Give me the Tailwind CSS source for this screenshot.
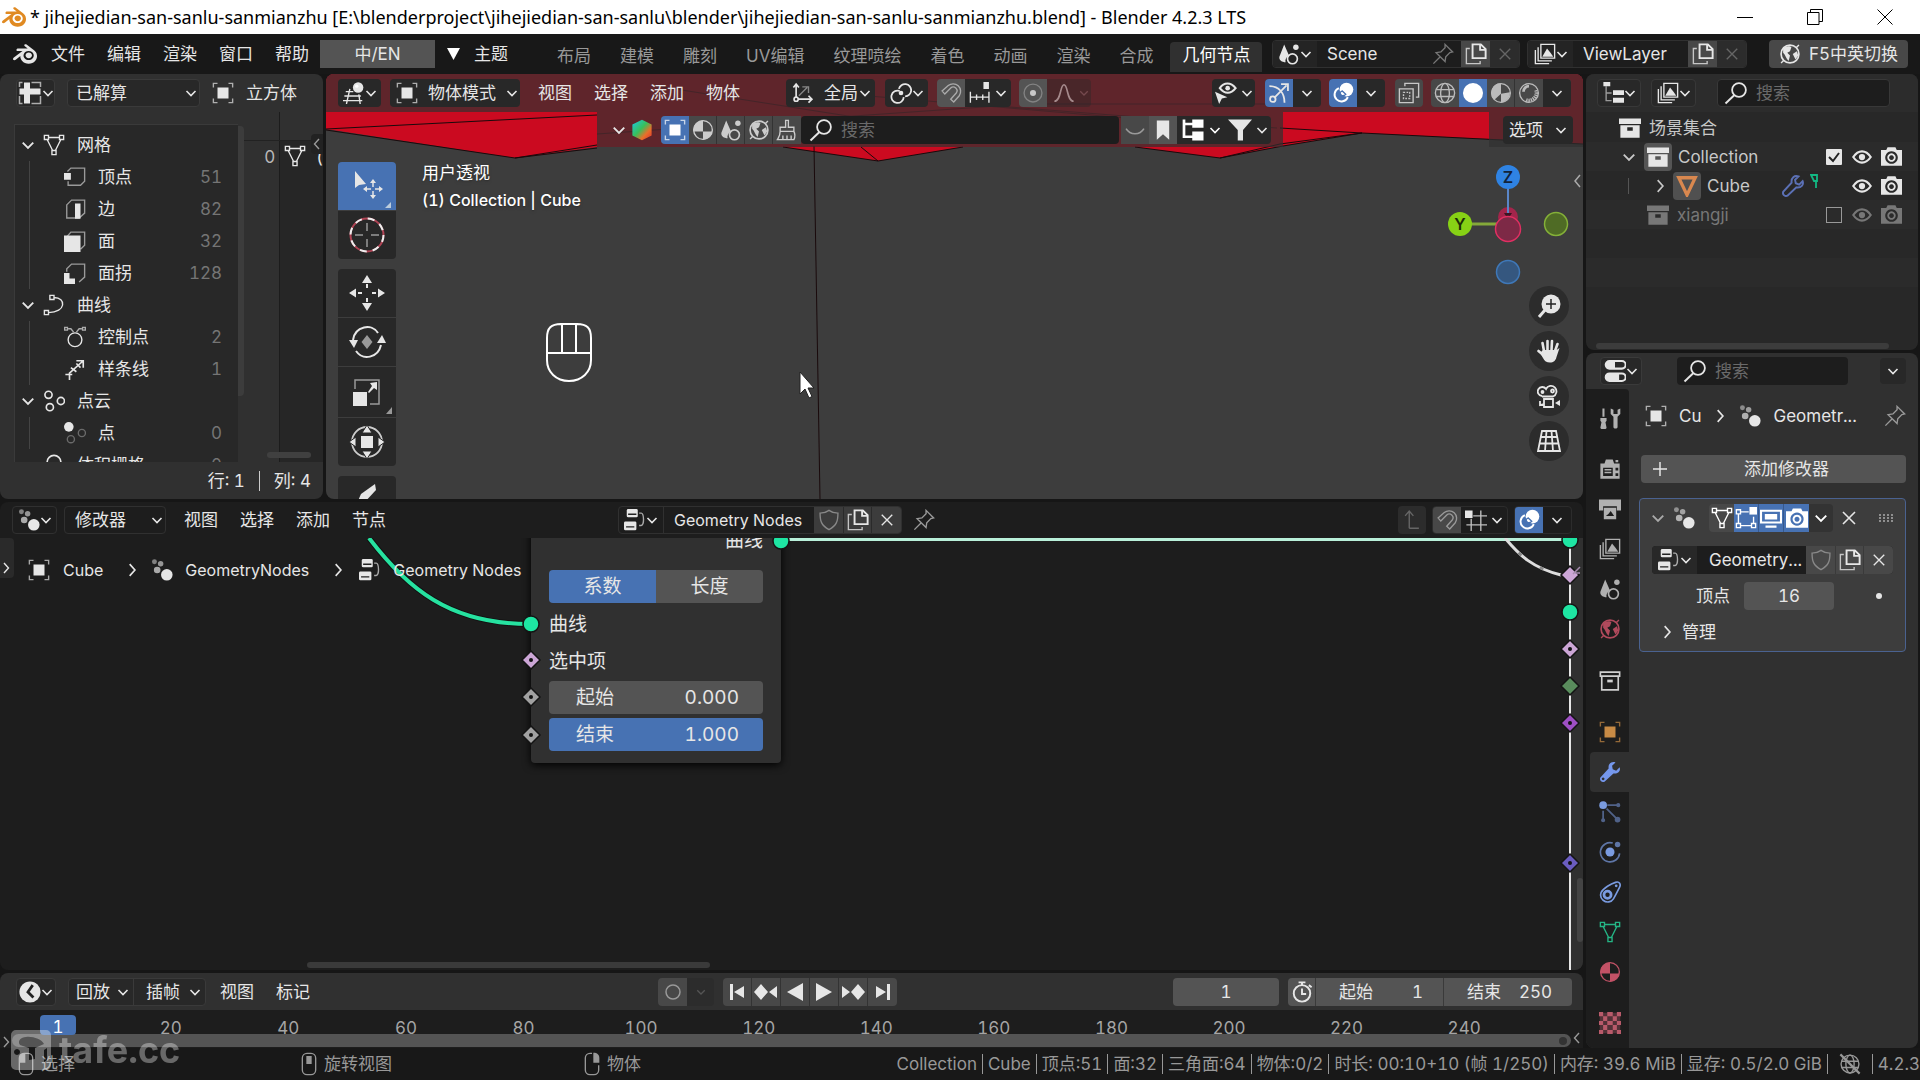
<!DOCTYPE html>
<html lang="zh-CN">
<head>
    <meta charset="UTF-8">
    <meta name="viewport" content="width=device-width, initial-scale=1.0">
    <title>Blender 4.2.3 LTS</title>
    <script src="https://cdn.jsdelivr.net/npm/@tailwindcss/browser@4"></script>
</head>
<body class="h-screen overflow-hidden flex flex-col bg-[#161616] text-[#e6e6e6] text-[17px] leading-6 whitespace-nowrap tabular-nums font-['Inter','Noto_Sans_CJK_SC',sans-serif]">

<!-- Icon set -->
<svg class="absolute size-0" xmlns="http://www.w3.org/2000/svg">
    <defs><linearGradient id="rainbow" x1="0" y1="0" x2="1" y2="1"><stop offset="0" stop-color="#19c8e6"/><stop offset=".45" stop-color="#38c05a"/><stop offset=".7" stop-color="#e8702a"/><stop offset="1" stop-color="#e0302c"/></linearGradient></defs>
    <symbol id="blender" viewBox="0 0 24 24"><path fill="currentColor" d="M12.51 13.214c.046-.8.438-1.506 1.03-2.006a3.424 3.424 0 0 1 2.212-.79c.85 0 1.631.3 2.211.79.592.5.983 1.206 1.028 2.005.045.823-.285 1.586-.865 2.153a3.389 3.389 0 0 1-2.374.938 3.393 3.393 0 0 1-2.376-.938c-.58-.567-.91-1.33-.865-2.152M7.35 14.831c.006.314.106.922.256 1.398a7.372 7.372 0 0 0 1.593 2.757 8.227 8.227 0 0 0 2.787 2.001 8.947 8.947 0 0 0 3.66.76 8.964 8.964 0 0 0 3.657-.772 8.285 8.285 0 0 0 2.785-2.01 7.428 7.428 0 0 0 1.592-2.762 6.964 6.964 0 0 0 .25-3.074 7.123 7.123 0 0 0-1.016-2.779 7.764 7.764 0 0 0-1.852-2.043h.002L13.566 2.55l-.02-.015c-.492-.378-1.319-.376-1.86.002-.547.382-.609 1.015-.123 1.415l-.001.001 3.126 2.543-9.53.01h-.013c-.788.001-1.545.518-1.695 1.172-.154.665.38 1.217 1.2 1.22V8.9l4.83-.01-8.62 6.617-.034.025c-.813.622-1.075 1.658-.563 2.313.52.667 1.625.668 2.447.004L7.414 14s-.069.52-.063.831zm12.09 1.741c-.97.988-2.326 1.548-3.795 1.55-1.47.004-2.827-.552-3.797-1.538a4.51 4.51 0 0 1-1.036-1.622 4.282 4.282 0 0 1 .282-3.519 4.702 4.702 0 0 1 1.153-1.371c.942-.768 2.141-1.183 3.396-1.185 1.256-.002 2.455.41 3.398 1.175.48.391.87.854 1.152 1.367a4.28 4.28 0 0 1 .522 1.706 4.236 4.236 0 0 1-.239 1.811 4.54 4.54 0 0 1-1.035 1.626"/></symbol>
    <symbol id="down" viewBox="0 0 12 12"><path d="M1.5 4 6 8.5 10.5 4" fill="none" stroke="currentColor" stroke-width="1.6"/></symbol>
    <symbol id="right" viewBox="0 0 12 12"><path d="M4 1 8.500 6 4 11" fill="none" stroke="currentColor" stroke-width="1.4"/></symbol>
    <symbol id="left" viewBox="0 0 12 12"><path d="M8 1 3.500 6 8 11" fill="none" stroke="currentColor" stroke-width="1.4"/></symbol>
    <symbol id="close" viewBox="0 0 12 12"><path d="M1.500 1.500l9 9M10.500 1.500l-9 9" fill="none" stroke="currentColor" stroke-width="1.2"/></symbol>
    <symbol id="object" viewBox="0 0 16 16"><path fill="currentColor" d="M4 4h8v8H4z"/><path d="M1 4V1h3M12 1h3v3M15 12v3h-3M4 15H1v-3" fill="none" stroke="currentColor" opacity=".7"/></symbol>
    <symbol id="mesh" viewBox="0 0 16 16"><g fill="none" stroke="currentColor"><path d="M1 1h3v3H1zM12 1h3v3h-3zM6.500 12h3v3h-3zM4 2.500h8M3 4l4 8M13 4l-4 8"/></g></symbol>
    <symbol id="vert" viewBox="0 0 16 16"><path d="M2.500 4 5 1.500h10V11l-3 3H3v-3" fill="none" stroke="currentColor" opacity=".6"/><path fill="currentColor" d="M0 5h5v5H0z"/></symbol>
    <symbol id="edge" viewBox="0 0 16 16"><path d="M2 5 5.500 1.500H15V11l-4 3.500H2z" fill="none" stroke="currentColor" opacity=".6"/><path fill="currentColor" d="M8 4h4v11H8z"/></symbol>
    <symbol id="face" viewBox="0 0 16 16"><path d="M2 5 5 1.500h10V11l-3 3" fill="none" stroke="currentColor" opacity=".6"/><path fill="currentColor" d="M0 4h12v12H0z"/></symbol>
    <symbol id="corner" viewBox="0 0 16 16"><path d="M2 7V5l3.500-3.500H15V11l-4 3.500" fill="none" stroke="currentColor" opacity=".6"/><path fill="currentColor" d="M0 8h4v4h4v4H0z"/></symbol>
    <symbol id="curve" viewBox="0 0 16 16"><path d="M5 1h3v3H5zM1 12h3v3H1zM8 2.500c9 0 9 11-4 11" fill="none" stroke="currentColor"/></symbol>
    <symbol id="cpoint" viewBox="0 0 16 16"><g fill="none" stroke="currentColor"><circle cx="8" cy="10" r="5"/><path d="M3 2h2l2 2.500M13 2h-2L9 4.500" opacity=".7"/><path d="M.5 1h2v2h-2zM13.500 1h2v2h-2z" opacity=".7"/></g></symbol>
    <symbol id="spline" viewBox="0 0 16 16"><path d="M1 12h5M4 16v-5L14 2M9 2h5v5M5 7l4 3M9 4l3 3" fill="none" stroke="currentColor" stroke-width="1.200"/></symbol>
    <symbol id="cloud" viewBox="0 0 16 16"><g fill="none" stroke="currentColor" stroke-width="1.200"><circle cx="4" cy="3.500" r="2.600"/><circle cx="13" cy="8" r="2.600"/><circle cx="5" cy="12.500" r="2.600"/></g></symbol>
    <symbol id="cpt" viewBox="0 0 16 16"><circle cx="3.500" cy="3.500" r="3.500" fill="currentColor"/><g fill="none" stroke="currentColor" opacity=".35"><circle cx="13" cy="8" r="2.600"/><circle cx="5" cy="12.500" r="2.600"/></g></symbol>
    <symbol id="geo" viewBox="0 0 16 16"><g fill="currentColor"><circle cx="2.500" cy="2" r="1.800" opacity=".5"/><circle cx="7" cy="3.500" r="2" opacity=".6"/><circle cx="4.500" cy="8" r="2.400" opacity=".7"/><circle cx="11.500" cy="11.500" r="4.200"/></g></symbol>
    <symbol id="tree" viewBox="0 0 16 16"><g fill="currentColor"><rect x="2" width="8" height="6" rx="1"/><rect y="9" width="9" height="6.500" rx="1"/></g><path d="M11 3h1.500c2 0 2.500 9 0 9H11" fill="none" stroke="currentColor" opacity=".7"/><path d="M3 3.800h6M1.500 13h6" stroke="#222" stroke-width="1"/></symbol>
    <symbol id="sheet" viewBox="0 0 16 16"><path fill="currentColor" d="M4 1h4v4h7v4H8v6H4V9H1V5h3z"/><path d="M1 4V1h2M9 1h6v3M15 10v5H9M3 15H1v-5" fill="none" stroke="currentColor" opacity=".7"/></symbol>
    <symbol id="view3d" viewBox="0 0 16 16"><circle cx="11" cy="4" r="3.800" fill="currentColor"/><circle cx="10" cy="3" r="1.200" fill="#fff"/><path d="M2 7h5.500M0 13.500h14M1 10.200h12M5 5l-2.500 11M11.500 9l1 7" fill="none" stroke="currentColor"/></symbol>
    <symbol id="axes" viewBox="0 0 16 16"><path d="M3 2v9M4.500 12.500H14M1 4l2-2.500L5 4M12 10l2.500 2.500L12 15" fill="none" stroke="currentColor" stroke-width="1.200"/><circle cx="3" cy="12.500" r="1.500" fill="none" stroke="currentColor" stroke-width="1.200"/><path d="M5 10 11 4M7.500 3.500H12V8" fill="none" stroke="currentColor" opacity=".5"/></symbol>
    <symbol id="pivot" viewBox="0 0 16 16"><g fill="none" stroke="currentColor" stroke-width="1.300"><path d="M7 6.500a4.500 4.500 0 1 0 3 4.500"/><path d="M6.500 5a4.500 4.500 0 1 1 4.500 5.500"/></g><circle cx="8" cy="8" r="1.700" fill="currentColor"/></symbol>
    <symbol id="magnet" viewBox="0 0 16 16"><path d="M1.500 6.500 6 2.600a5.500 5.500 0 0 1 8 7.400l-4 4.500-2.200-2 4-4.500a2.700 2.700 0 0 0-4-3.600L3.500 8.800z" fill="none" stroke="currentColor"/></symbol>
    <symbol id="incr" viewBox="0 0 16 16"><path fill="currentColor" d="M10.500 0h4v5h-4z"/><path d="M1 7v8M5.500 9v4M10 9v4M14.500 7v8M1 11h14" fill="none" stroke="currentColor"/></symbol>
    <symbol id="prop" viewBox="0 0 16 16"><circle cx="8" cy="8" r="6.500" fill="none" stroke="currentColor" opacity=".4"/><circle cx="8" cy="8" r="2.200" fill="currentColor"/></symbol>
    <symbol id="falloff" viewBox="0 0 16 16"><path d="M1 14c5 0 4-12 7-12s2 12 7 12" fill="none" stroke="currentColor" stroke-width="1.200"/></symbol>
    <symbol id="eye" viewBox="0 0 16 16"><path d="M1 8c4-6 10-6 14 0-4 6-10 6-14 0z" fill="none" stroke="currentColor" stroke-width="1.700"/><circle cx="8" cy="8" r="2.500" fill="currentColor"/></symbol>
    <symbol id="eyesel" viewBox="0 0 16 16"><path d="M3.500 4.500c3-4.500 8-4.500 11.500 0-3.500 4.500-8 4.500-11.500 0z" fill="none" stroke="currentColor" stroke-width="1.500"/><circle cx="9.200" cy="4.500" r="1.700" fill="currentColor"/><path fill="currentColor" d="m0 7 9 4-4 1-2 4z"/></symbol>
    <symbol id="gizmo" viewBox="0 0 16 16"><path d="M1 3c7 0 11 5 11 12M4.500 11.500 13.500 2.500M9.500 1.500h5v5" fill="none" stroke="currentColor" stroke-width="1.300"/><circle cx="3.500" cy="12.500" r="2" fill="none" stroke="currentColor" stroke-width="1.300"/></symbol>
    <symbol id="overlay" viewBox="0 0 16 16"><circle cx="10.500" cy="5.500" r="5" fill="currentColor"/><path d="M5 4.500a5 5 0 1 0 6.500 6.500" fill="none" stroke="currentColor" stroke-width="1.400"/><path d="M5.500 9a3 3 0 0 1 2-2.500L10 9a3 3 0 0 1-4.500 0z" fill="none" stroke="#4772b3"/></symbol>
    <symbol id="xray" viewBox="0 0 16 16"><path d="M1 5h10v10H1zM5 3V1h10v10h-2" fill="none" stroke="currentColor"/><path d="M4 7.500h4.500V12H4z" fill="none" stroke="currentColor" stroke-dasharray="1.200 1"/></symbol>
    <symbol id="wire" viewBox="0 0 16 16"><g fill="none" stroke="currentColor"><circle cx="8" cy="8" r="7"/><ellipse cx="8" cy="8" rx="3.200" ry="7"/><path d="M1.500 5.500h13M1.500 10.500h13"/></g></symbol>
    <symbol id="solid" viewBox="0 0 16 16"><circle cx="8" cy="8" r="7.300" fill="currentColor"/></symbol>
    <symbol id="material" viewBox="0 0 16 16"><circle cx="8" cy="8" r="6.800" fill="none" stroke="currentColor"/><path fill="currentColor" d="M8 1v7.500l-5 4.500A7 7 0 0 1 8 1zM8 8.500l6.500-1A7 7 0 0 1 8 15z"/></symbol>
    <symbol id="matball" viewBox="0 0 16 16"><circle cx="8" cy="8" r="6.800" fill="none" stroke="currentColor"/><path fill="currentColor" d="M8 1v8H1.200A7 7 0 0 1 8 1zM8 9h6.800A7 7 0 0 1 8 15z"/></symbol>
    <symbol id="render" viewBox="0 0 16 16"><circle cx="8" cy="8" r="6.800" fill="none" stroke="currentColor"/><path d="M4 7a4 4 0 0 1 4-4" stroke="currentColor" fill="none" stroke-width="2"/><path d="M6 13A5.500 5.500 0 0 0 13 6" stroke="currentColor" fill="none" stroke-width="2.400" stroke-dasharray="1 .6"/></symbol>
    <symbol id="scene" viewBox="0 0 16 16"><path fill="currentColor" d="M4.500 1 8 9c-2 1-3 3-2.500 5C3 14 .5 12.500 1 10z"/><circle cx="13" cy="3" r="2" fill="currentColor"/><circle cx="10.500" cy="11.500" r="3.600" fill="none" stroke="currentColor" stroke-width="1.200"/></symbol>
    <symbol id="world" viewBox="0 0 16 16"><circle cx="8" cy="8" r="6.500" fill="none" stroke="currentColor" stroke-width="1.200"/><path fill="currentColor" d="M3 4c2-2 5-2 6-1l-1 3-2 1 2 2-1 4C5 11 5 9 3 7zM10 8l3-2 1 3-2 3z"/><path d="m1.500 14.500 2-2M12.500 3.500l2-2" stroke="currentColor"/></symbol>
    <symbol id="noworld" viewBox="0 0 16 16"><g fill="none" stroke="currentColor"><circle cx="8" cy="8" r="6.500"/><ellipse cx="8" cy="8" rx="3" ry="6.500"/><path d="M2 6h12M2 10.500h12"/><path d="m1 1 14 14" stroke-width="1.600"/></g></symbol>
    <symbol id="brush" viewBox="0 0 16 16"><path d="M7 6V1h2v5h4v3H3V6zM3 9c0 3-1 4-2 6h12c1-2 1-4 0-6M5 12v3M8 12v3M11 12v3" fill="none" stroke="currentColor"/></symbol>
    <symbol id="search" viewBox="0 0 16 16"><circle cx="10" cy="6" r="4.600" fill="none" stroke="currentColor" stroke-width="1.200"/><path d="M6.800 9.500 1 15" stroke="currentColor" stroke-width="1.300"/></symbol>
    <symbol id="closedeye" viewBox="0 0 16 16"><path d="M1.500 7c3 5 10 5 13 0" fill="none" stroke="currentColor" stroke-width="1.200"/></symbol>
    <symbol id="bookmark" viewBox="0 0 16 16"><path fill="currentColor" d="M3.500 1h9v14L8 11l-4.500 4z"/></symbol>
    <symbol id="hier" viewBox="0 0 16 16"><path fill="currentColor" d="M7.500 1H15v5.500H7.500zM7.500 9H15v6H7.500z"/><path d="M2 1v11.500h6M2 4h6" fill="none" stroke="currentColor" stroke-width="1.800"/></symbol>
    <symbol id="outliner" viewBox="0 0 16 16"><path fill="currentColor" d="M1 0h5v3H1zM8 6h8v3.500H8zM8 11.500h8V15H8z"/><path d="M3 3v10.500h4M3 8h4" fill="none" stroke="currentColor" opacity=".6"/></symbol>
    <symbol id="funnel" viewBox="0 0 16 16"><path fill="currentColor" d="M0 1h16l-6 7v7H6.500V8z"/></symbol>
    <symbol id="pin" viewBox="0 0 16 16"><path d="m9.500 1 5.500 5.500-2 .5-3 3-.5 3.500L3 7l3.500-.5 3-3zM6 10l-5 5" fill="none" stroke="currentColor"/></symbol>
    <symbol id="copy" viewBox="0 0 16 16"><path d="M5.500 1h6L15 4.500V11H5.500zM11 1v4h4" fill="none" stroke="currentColor" stroke-width="1.400"/><path d="M3.500 4H1v11h10v-2" fill="none" stroke="currentColor" opacity=".8"/></symbol>
    <symbol id="layers" viewBox="0 0 16 16"><path d="M5 1h10v10H5zM3 3v10h10M1 5v10h10" fill="none" stroke="currentColor"/><path fill="currentColor" d="m6 10 3.500-6L12 7l2 3z"/></symbol>
    <symbol id="shield" viewBox="0 0 16 16"><path d="M8 1c2 1.500 4 2 6.500 2 0 6-1 9-6.500 12C2.500 12 1.500 9 1.500 3 4 3 6 2.500 8 1z" fill="none" stroke="currentColor"/></symbol>
    <symbol id="coll" viewBox="0 0 16 16"><path fill="currentColor" fill-rule="evenodd" d="M0 1h16v4H0zM1 6h14v9H1zm5 1.500v2.500h4V7.500z"/></symbol>
    <symbol id="colltab" viewBox="0 0 16 16"><path d="M1 1.500h14v3H1zM2 5v9.500h12V5" fill="none" stroke="currentColor" stroke-width="1.200"/><path fill="currentColor" d="M6 7h4v2H6z"/></symbol>
    <symbol id="camera" viewBox="0 0 16 16"><path fill="currentColor" fill-rule="evenodd" d="M0 3h4l1-2h6l1 2h4v12H0zm8 1a4.800 4.800 0 1 0 .01 0zm0 1.600a3.200 3.200 0 1 1-.01 0zm0 1.500a1.800 1.800 0 1 0 .01 0z"/></symbol>
    <symbol id="wrench" viewBox="0 0 16 16"><path fill="currentColor" d="M15 4.500 12.500 7 10 6l-.5-2.500L12 1C9 0 6.500 2 7 5.500L1 12c-1 2 1 4 3 3l6.500-6C14 9.500 16 7 15 4.500zM3 14a1 1 0 1 1 .01 0z"/></symbol>
    <symbol id="wrenchline" viewBox="0 0 16 16"><path fill="none" stroke="currentColor" stroke-width="1.400" d="M15 4.500 12.500 7 10 6l-.5-2.500L12 1C9 0 6.500 2 7 5.500L1 12c-1 2 1 4 3 3l6.500-6C14 9.500 16 7 15 4.500z"/></symbol>
    <symbol id="tools" viewBox="0 0 16 16"><path fill="currentColor" d="M2.500 1h1.500v6H2.500zM1 8h4.500v2l-.8 1 .8 4c0 1.500-4.500 1.500-4.500 0l.8-4L1 10zM8.500 1v4l2 2v7.500c0 1.500 3 1.500 3 0V7l2-2V1L13.500 2v3h-3V2z"/></symbol>
    <symbol id="rendertab" viewBox="0 0 16 16"><path fill="currentColor" fill-rule="evenodd" d="M1 4h3l1-3h5l1 3h4v11H1zm2 3v6h7V7zm9 0v2h2V7zm0 4v2h2v-2z"/><path fill="currentColor" d="M4 8h5v1H4zM4 10h5v1H4zM12 1.500h2V3h-2z"/></symbol>
    <symbol id="printer" viewBox="0 0 16 16"><path fill="currentColor" fill-rule="evenodd" d="M0 1h16v8h-3V6H3v3H0zM3.500 7h9v8.500h-9zM5 13h6L8.500 9.500 7 11.500z"/></symbol>
    <symbol id="particles" viewBox="0 0 16 16"><circle cx="3" cy="3" r="2.800" fill="currentColor"/><g stroke="currentColor" opacity=".55"><path d="M6 3h8M3 7v7M5.500 5.500 13 13" stroke-width="1.300"/><circle cx="14" cy="3" r="1" fill="currentColor"/><circle cx="3" cy="14" r="1" fill="currentColor"/><circle cx="13.500" cy="13.500" r="1.600" fill="currentColor"/></g></symbol>
    <symbol id="physics" viewBox="0 0 16 16"><circle cx="8" cy="8" r="3.300" fill="currentColor"/><g opacity=".7"><path d="M10 1.500A7 7 0 1 0 15 9" fill="none" stroke="currentColor" stroke-width="1.200"/><circle cx="13.500" cy="2.500" r="2" fill="currentColor"/></g></symbol>
    <symbol id="constraint" viewBox="0 0 16 16"><path d="M1.500 8.500C3 5 9 2 12 1s4 1.500 3 3.500-3 6-4.500 8.500-5 3-7.500 1-2-4-1.500-5.500z" fill="none" stroke="currentColor" stroke-width="1.200"/><circle cx="6.200" cy="10" r="2.600" fill="none" stroke="currentColor" stroke-width="2"/><circle cx="12.500" cy="3.500" r="1" fill="currentColor"/></symbol>
    <symbol id="texture" viewBox="0 0 16 16"><path d="M.5.5h15v15H.5z" fill="currentColor" opacity=".35"/><path fill="currentColor" d="M0 0h3v3H0zM6 0h4v3H6zM13 0h3v3h-3zM3 3h3v3.500H3zM10 3h3v3.500h-3zM0 6.500h3v3H0zM6 6.500h4v3H6zM13 6.500h3v3h-3zM3 9.500h3V13H3zM10 9.500h3V13h-3zM0 13h3v3H0zM6 13h4v3H6zM13 13h3v3h-3z"/></symbol>
    <symbol id="props" viewBox="0 0 16 16"><path fill="currentColor" fill-rule="evenodd" d="M4 0h9a3.500 3.500 0 0 1 0 7H4a3.500 3.500 0 0 1 0-7zm4 1.500v4h5a2 2 0 0 0 0-4zM4 9h9a3.500 3.500 0 0 1 0 7H4a3.500 3.500 0 0 1 0-7zm7 1.500v4h2a2 2 0 0 0 0-4z"/></symbol>
    <symbol id="editmode" viewBox="0 0 16 16"><path d="M1 2h3v3H1zM1 12h3v3H1zM12 12h3v3h-3zM4 3.500h6M2.500 5v7M4 13.500h8M13.500 7v5" fill="none" stroke="currentColor"/><path fill="currentColor" d="M10.500 0H16v5.500h-5.500z"/></symbol>
    <symbol id="monitor" viewBox="0 0 16 16"><path fill="currentColor" fill-rule="evenodd" d="M0 2h16v10H0zm1.500 1.500v7h13v-7zM3.500 5h9v4h-9zM4 13.500h8V15H4z"/></symbol>
    <symbol id="parent" viewBox="0 0 16 16"><path d="M6 14V2M3 5l3-3.500L9 5M6 14h7" fill="none" stroke="currentColor"/></symbol>
    <symbol id="grid" viewBox="0 0 16 16"><path fill="currentColor" d="M0 1h5.500v5.500H0z"/><path d="M6 5h10M1 11.500h15M4.500 7v9M11.500 1v15" fill="none" stroke="currentColor" opacity=".8"/></symbol>
    <symbol id="clock" viewBox="0 0 16 16"><circle cx="8" cy="8" r="7.700" fill="currentColor"/><path d="M10 3 6.500 8l4 4" stroke="#222" stroke-width="2" fill="none"/></symbol>
    <symbol id="stopwatch" viewBox="0 0 16 16"><circle cx="8" cy="9" r="6" fill="none" stroke="currentColor" stroke-width="1.400"/><path d="M8 5.500V9.500h3M5.500 1h5M8 1v2M13 3l2 1.500" fill="none" stroke="currentColor" stroke-width="1.400"/></symbol>
    <symbol id="mouseL" viewBox="0 0 12 18"><rect x="1" y="1" width="10" height="16" rx="3.500" fill="none" stroke="currentColor"/><path fill="currentColor" d="M1 4.500C1 2 2.500 1 5.500 1v7H1z"/></symbol>
    <symbol id="mouseM" viewBox="0 0 12 18"><rect x="1" y="1" width="10" height="16" rx="3.500" fill="none" stroke="currentColor"/><path fill="currentColor" d="M4 3h4v6H4z"/></symbol>
    <symbol id="mouseR" viewBox="0 0 12 18"><path d="M6 1H4.500C2.500 1 1 2.500 1 4.500v9C1 15.500 2.500 17 4.500 17h3c2 0 3.500-1.500 3.500-3.500V10" fill="none" stroke="currentColor"/><path fill="currentColor" d="M11.500 4.500C11.500 2 10 .5 7 .5V8h4.500z"/></symbol>
</svg>

<!-- Window title bar -->
<header class="h-[34px] shrink-0 bg-white text-black flex items-center pl-0.5">
    <svg class="size-6 text-[#e08a22]"><use href="#blender"/></svg>
    <h1 class="ml-1 flex-1 text-[18px] font-['Noto_Sans',sans-serif]">* jihejiedian-san-sanlu-sanmianzhu [E:\blenderproject\jihejiedian-san-sanlu\blender\jihejiedian-san-sanlu-sanmianzhu.blend] - Blender 4.2.3 LTS</h1>
    <button aria-label="最小化" class="w-[70px] h-full flex items-center justify-center"><svg class="size-4" viewBox="0 0 16 16"><path d="M0 8.500h16" stroke="#000"/></svg></button>
    <button aria-label="还原" class="w-[70px] h-full flex items-center justify-center"><svg class="size-4" viewBox="0 0 16 16"><path d="M.5 3.500h11.500v12H.5zM3.500 3.500v-3h12v12h-3.500" fill="none" stroke="#000"/></svg></button>
    <button aria-label="关闭" class="w-[70px] h-full flex items-center justify-center"><svg class="size-4" viewBox="0 0 16 16"><path d="m.5.5 15 15M15.500.5l-15 15" stroke="#000"/></svg></button>
</header>

<!-- Top bar -->
<nav class="h-10 shrink-0 bg-[#181818] flex items-center pl-[13px]">
    <div class="flex items-center gap-[22px] h-7">
        <div class="flex items-center gap-3.5"><svg class="size-6"><use href="#blender"/></svg><button>文件</button></div>
        <button>编辑</button><button>渲染</button><button>窗口</button><button>帮助</button>
    </div>
    <button class="ml-[11px] w-[115px] h-7 bg-[#545454]">中/EN</button>
    <button class="ml-3 h-7 flex items-center gap-3.5"><svg class="w-[13px] h-3" viewBox="0 0 13 12"><path fill="#fff" d="M0 0h13L6.500 12z"/></svg>主题</button>
    <div class="flex-1 min-w-0 flex gap-[5px] pl-[37px] self-end h-8 text-[#989898]">
        <button class="px-3 pb-1">布局</button><button class="px-3 pb-1">建模</button><button class="px-3 pb-1">雕刻</button><button class="px-3 pb-1">UV编辑</button><button class="px-3 pb-1">纹理喷绘</button><button class="px-3 pb-1">着色</button><button class="px-3 pb-1">动画</button><button class="px-3 pb-1">渲染</button><button class="px-3 pb-1">合成</button><button class="px-3 pb-1 h-[30px] bg-[#303030] text-white rounded-t">几何节点</button>
    </div>
    <div class="h-7 flex rounded overflow-hidden bg-[#1d1d1d] border border-[#303030]">
        <button aria-label="浏览场景" class="w-11 flex items-center justify-center bg-[#242424]"><svg class="size-[22px]"><use href="#scene"/></svg><svg class="size-3"><use href="#down"/></svg></button>
        <input aria-label="场景名称" value="Scene" class="w-[108px] pl-2.5">
        <button aria-label="固定场景" class="w-9 flex items-center justify-center text-[#777]"><svg class="size-[22px]"><use href="#pin"/></svg></button>
        <button aria-label="新建场景" class="w-[29px] flex items-center justify-center bg-[#484848]"><svg class="size-[22px]"><use href="#copy"/></svg></button>
        <button aria-label="删除场景" class="w-[29px] flex items-center justify-center bg-[#2c2c2c] text-[#666]"><svg class="size-3.5"><use href="#close"/></svg></button>
    </div>
    <div class="ml-[7px] h-7 flex rounded overflow-hidden bg-[#1d1d1d] border border-[#303030]">
        <button aria-label="浏览视图层" class="w-[45px] flex items-center justify-center bg-[#242424]"><svg class="size-[22px]"><use href="#layers"/></svg><svg class="size-3"><use href="#down"/></svg></button>
        <input aria-label="视图层名称" value="ViewLayer" class="w-[115px] pl-2.5">
        <button aria-label="新建视图层" class="w-[29px] flex items-center justify-center bg-[#484848]"><svg class="size-[22px]"><use href="#copy"/></svg></button>
        <button aria-label="删除视图层" class="w-[29px] flex items-center justify-center bg-[#2c2c2c] text-[#666]"><svg class="size-3.5"><use href="#close"/></svg></button>
    </div>
    <button class="ml-[22px] mr-3 w-[139px] h-7 rounded bg-[#484848] flex items-center justify-center gap-2">
        <svg class="size-[22px]"><use href="#world"/></svg>F5中英切换</button>
</nav>

<div class="flex-1 min-h-0 flex gap-[3px]">
<div class="flex-1 min-w-0 flex flex-col gap-[3px]">
    <div class="h-[425px] shrink-0 flex gap-[3px]">

        <!-- Spreadsheet -->
        <section class="w-[323px] shrink-0 bg-[#303030] rounded-lg flex flex-col overflow-hidden">
            <div class="h-[38px] shrink-0 flex items-center pl-4 gap-3">
                <button aria-label="编辑器类型" class="w-[39px] h-7 rounded border border-[#3a3a3a] bg-[#282828] flex items-center justify-center"><svg class="size-6 shrink-0"><use href="#sheet"/></svg><svg class="size-3 shrink-0"><use href="#down"/></svg></button>
                <label class="w-[133px] h-7 rounded border border-[#3a3a3a] bg-[#282828] flex items-center pl-2 pr-0.5"><select aria-label="数据来源" class="appearance-none flex-1"><option>已解算</option></select><svg class="size-3"><use href="#down"/></svg></label>
                <span class="flex items-center gap-3"><svg class="size-[22px]"><use href="#object"/></svg>立方体</span>
            </div>
            <div class="flex-1 min-h-0 flex">
                <div class="mt-3 ml-3.5 w-56 shrink-0 bg-[#282828] border-l border-t border-[#3a3a3a] overflow-hidden pt-1">
                    <ul class="[&>li]:h-8 [&>li]:flex [&>li]:items-center [&>li]:pr-4">
                        <li class="pl-1.5"><svg class="size-3.5"><use href="#down"/></svg><svg class="size-[22px] ml-2 mr-3"><use href="#mesh"/></svg>网格</li>
                        <li class="ml-3.5 border-l border-[#444] pl-[34px]"><svg class="size-[22px] mr-3"><use href="#vert"/></svg><span class="flex-1">顶点</span><span class="text-[#757575]">51</span></li>
                        <li class="ml-3.5 border-l border-[#444] pl-[34px]"><svg class="size-[22px] mr-3"><use href="#edge"/></svg><span class="flex-1">边</span><span class="text-[#757575]">82</span></li>
                        <li class="ml-3.5 border-l border-[#444] pl-[34px]"><svg class="size-[22px] mr-3"><use href="#face"/></svg><span class="flex-1">面</span><span class="text-[#757575]">32</span></li>
                        <li class="ml-3.5 border-l border-[#444] pl-[34px]"><svg class="size-[22px] mr-3"><use href="#corner"/></svg><span class="flex-1">面拐</span><span class="text-[#757575]">128</span></li>
                        <li class="pl-1.5"><svg class="size-3.5"><use href="#down"/></svg><svg class="size-[22px] ml-2 mr-3"><use href="#curve"/></svg>曲线</li>
                        <li class="ml-3.5 border-l border-[#444] pl-[34px]"><svg class="size-[22px] mr-3"><use href="#cpoint"/></svg><span class="flex-1">控制点</span><span class="text-[#757575]">2</span></li>
                        <li class="ml-3.5 border-l border-[#444] pl-[34px]"><svg class="size-[22px] mr-3"><use href="#spline"/></svg><span class="flex-1">样条线</span><span class="text-[#757575]">1</span></li>
                        <li class="pl-1.5"><svg class="size-3.5"><use href="#down"/></svg><svg class="size-[22px] ml-2 mr-3"><use href="#cloud"/></svg>点云</li>
                        <li class="ml-3.5 border-l border-[#444] pl-[34px]"><svg class="size-[22px] mr-3"><use href="#cpt"/></svg><span class="flex-1">点</span><span class="text-[#757575]">0</span></li>
                        <li class="pl-7"><svg class="size-[22px] mr-3" viewBox="0 0 16 16"><circle cx="8" cy="6" r="5" fill="none" stroke="currentColor" stroke-width="1.200"/></svg><span class="flex-1">体积栅格</span><span class="text-[#757575]">0</span></li>
                    </ul>
                </div>
                <div class="mt-3.5 w-2.5 h-[270px] bg-[#3c3c3c] rounded-r"></div>
                <div class="flex-1 flex flex-col relative">
                    <div class="h-[29px] flex border-b border-[#222]"><div class="w-9 border-r border-[#1c1c1c]"></div><div class="flex-1 bg-[#303030]"></div></div>
                    <div class="flex-1 flex">
                        <div class="w-9 border-r border-[#1c1c1c] text-right pr-1 pt-1 text-[#b8b8b8]">0</div>
                        <div class="flex-1 bg-[#262626] pt-1 pl-1 flex"><svg class="size-[22px]"><use href="#mesh"/></svg><span class="ml-2.5">(</span></div>
                    </div>
                    <div class="absolute right-0 top-[22px] w-3 h-5 bg-[#222] rounded-l flex items-center"><svg class="size-3 text-[#999]"><use href="#left"/></svg></div>
                    <div class="absolute right-3 bottom-1 w-11 h-1.5 bg-[#404040] rounded"></div>
                </div>
            </div>
            <div class="h-[37px] shrink-0 flex items-center justify-end gap-3.5 pr-3"><span>行: 1</span><span class="w-px h-5 bg-[#ccc]"></span><span>列: 4</span></div>
        </section>

        <!-- 3D viewport -->
        <section class="flex-1 min-w-0 relative bg-[#3d3d3d] rounded-lg overflow-hidden">
            <svg class="absolute inset-0 size-full">
                <path d="M0 0H1600V78L1257 70 1163 65 1036 59 957 72 894 84 809 73H637L552 87 457 73H271L189 84 0 55z" fill="#cb0a20"/>
                <path d="M0 56 189 84 271 74M0 55 271 41M189 84l82-13M457 73l95 14 85-14M535 73l17 14M809 73l85 11 63-12 79-13M894 84l60-14 82-11M954 54l82 5 221 11M488 72l6 353" fill="none" stroke="#1a0a0c"/>
                <path d="M271 60l400-28 280 22M330 12l320 50M520 20l280 24M700 30h250" fill="none" stroke="#1a0a0c" opacity=".5"/>
            </svg>
            <div class="relative h-[38px] bg-[#303030]/70 flex items-center pl-3 pr-3 text-[#e6e6e6]">
                <button aria-label="编辑器类型" class="w-[43px] h-7 rounded bg-[#282828] flex items-center justify-center"><svg class="size-[22px]"><use href="#view3d"/></svg><svg class="size-3"><use href="#down"/></svg></button>
                <label class="ml-[9px] w-[130px] h-7 rounded bg-[#282828] flex items-center pl-1.5 pr-0.5"><svg class="size-[22px]"><use href="#object"/></svg><select aria-label="交互模式" class="ml-2.5 appearance-none flex-1"><option>物体模式</option></select><svg class="size-3"><use href="#down"/></svg></label>
                <div class="ml-[18px] flex gap-[22px]"><button>视图</button><button>选择</button><button>添加</button><button>物体</button></div>
                <label class="ml-[46px] w-[89px] h-7 rounded bg-[#282828] flex items-center pl-1.5 pr-1"><svg class="size-[22px]"><use href="#axes"/></svg><select aria-label="变换坐标系" class="ml-2.5 w-10 appearance-none flex-1"><option>全局</option></select><svg class="size-3"><use href="#down"/></svg></label>
                <button aria-label="变换轴心点" class="ml-2.5 w-[43px] h-7 rounded bg-[#282828] flex items-center justify-center"><svg class="size-[22px]"><use href="#pivot"/></svg><svg class="size-3"><use href="#down"/></svg></button>
                <div class="ml-[9px] h-7 flex rounded overflow-hidden"><button aria-label="吸附" class="w-7 bg-[#545454] text-[#aaa] flex items-center justify-center"><svg class="size-[22px]"><use href="#magnet"/></svg></button><button aria-label="吸附至" class="w-[46px] bg-[#282828] flex items-center justify-center gap-1"><svg class="size-[22px]"><use href="#incr"/></svg><svg class="size-3"><use href="#down"/></svg></button></div>
                <div class="ml-2 h-7 flex rounded overflow-hidden"><button aria-label="衰减编辑" class="w-7 bg-[#545454] text-[#c8c8c8] flex items-center justify-center"><svg class="size-[22px]"><use href="#prop"/></svg></button><button aria-label="衰减类型" class="w-11 bg-[#282828]/40 text-[#a58a8c] flex items-center pl-1.5 gap-1"><svg class="size-[22px]"><use href="#falloff"/></svg><svg class="size-2.5 text-[#75494e]"><use href="#down"/></svg></button></div>
                <div class="flex-1"></div>
                <button aria-label="可见性" class="w-[43px] h-7 rounded bg-[#282828] flex items-center justify-center gap-1"><svg class="size-[22px]"><use href="#eyesel"/></svg><svg class="size-3"><use href="#down"/></svg></button>
                <div class="ml-2.5 h-7 flex rounded overflow-hidden bg-[#282828]"><button aria-label="显示控件" class="w-7 bg-[#4772b3] flex items-center justify-center"><svg class="size-[22px]"><use href="#gizmo"/></svg></button><button aria-label="控件选项" class="w-7 flex items-center justify-center"><svg class="size-3"><use href="#down"/></svg></button></div>
                <div class="ml-2 h-7 flex rounded overflow-hidden bg-[#282828]"><button aria-label="显示叠加层" class="w-7 bg-[#4772b3] text-white flex items-center justify-center"><svg class="size-[22px]"><use href="#overlay"/></svg></button><button aria-label="叠加层选项" class="w-7 flex items-center justify-center"><svg class="size-3"><use href="#down"/></svg></button></div>
                <button aria-label="透视模式" class="ml-2.5 w-7 h-7 rounded bg-[#484848] text-[#c8c8c8] flex items-center justify-center"><svg class="size-[22px]"><use href="#xray"/></svg></button>
                <div class="ml-2 h-7 flex rounded overflow-hidden bg-[#484848] text-[#bbb]">
                    <button aria-label="线框" class="w-7 flex items-center justify-center"><svg class="size-[22px]"><use href="#wire"/></svg></button>
                    <button aria-label="实体" class="w-7 bg-[#4772b3] text-white flex items-center justify-center"><svg class="size-[22px]"><use href="#solid"/></svg></button>
                    <button aria-label="材质预览" class="w-7 border-r border-[#333] flex items-center justify-center"><svg class="size-[22px]"><use href="#material"/></svg></button>
                    <button aria-label="渲染" class="w-7 flex items-center justify-center"><svg class="size-[22px]"><use href="#render"/></svg></button>
                    <button aria-label="着色选项" class="w-7 bg-[#282828] text-[#e6e6e6] flex items-center justify-center"><svg class="size-3"><use href="#down"/></svg></button>
                </div>
            </div>
            <div class="relative flex h-[35px]">
                <div class="w-[271px]"></div>
                <div class="flex-1 bg-[#303030]/70 flex items-center pl-[15px]">
                    <svg class="size-3.5"><use href="#down"/></svg>
                    <svg class="size-[22px] ml-[5px]" viewBox="0 0 16 16"><path d="M8 .5 15 4v8l-7 3.500L1 12V4z" fill="url(#rainbow)"/></svg>
                    <div class="ml-2 h-7 flex rounded-l overflow-hidden bg-[#484848] text-[#ccc]">
                        <button aria-label="物体" class="w-7 bg-[#4772b3] text-white flex items-center justify-center"><svg class="size-[22px]"><use href="#object"/></svg></button>
                        <button aria-label="材质" class="w-7 border-r border-[#333] flex items-center justify-center"><svg class="size-[22px]"><use href="#matball"/></svg></button>
                        <button aria-label="场景" class="w-7 border-r border-[#333] flex items-center justify-center"><svg class="size-[22px]"><use href="#scene"/></svg></button>
                        <button aria-label="世界" class="w-7 border-r border-[#333] flex items-center justify-center"><svg class="size-[22px]"><use href="#world"/></svg></button>
                        <button aria-label="笔刷" class="w-7 flex items-center justify-center"><svg class="size-[22px]"><use href="#brush"/></svg></button>
                    </div>
                    <label class="flex-1 h-7 bg-[#1d1d1d] rounded flex items-center pl-2"><svg class="size-6"><use href="#search"/></svg><input aria-label="搜索资产" placeholder="搜索" class="ml-2 flex-1 min-w-0 placeholder:text-[#6a6a6a]"></label>
                    <button aria-label="隐藏" class="ml-0.5 w-7 h-7 bg-[#484848] text-[#999] flex items-center justify-center"><svg class="size-[22px]"><use href="#closedeye"/></svg></button>
                    <button aria-label="书签" class="w-7 h-7 bg-[#545454] flex items-center justify-center"><svg class="size-[22px]"><use href="#bookmark"/></svg></button>
                    <button aria-label="层级" class="w-12 h-7 bg-[#282828] text-white flex items-center justify-center gap-1"><svg class="size-6"><use href="#hier"/></svg><svg class="size-3"><use href="#down"/></svg></button>
                    <button aria-label="过滤" class="w-[46px] h-7 rounded-r bg-[#282828] flex items-center justify-center gap-1 mr-3"><svg class="size-6"><use href="#funnel"/></svg><svg class="size-3"><use href="#down"/></svg></button>
                </div>
                <div class="w-[206px]"></div>
                <div class="w-[94px] bg-[#303030]/70 flex items-center pl-3.5"><button class="w-[70px] h-7 rounded bg-[#282828] flex items-center justify-center gap-3">选项<svg class="size-3"><use href="#down"/></svg></button></div>
            </div>

            <div class="relative flex pl-3 pt-[15px] gap-[26px]">
                <div class="w-[58px] flex flex-col gap-2.5">
                    <div class="flex flex-col gap-px rounded overflow-hidden">
                        <button aria-label="选择" class="h-12 bg-[#4772b3] flex items-center justify-center"><svg class="size-12" viewBox="0 0 48 48"><path fill="#e6e6e6" d="M12 9v17l4-3 7-1z"/><path d="M30 20v5M30 29v5M23 27h5M32 27h5" stroke="#e6e6e6" stroke-width="1.500"/><path fill="#e6e6e6" d="m30 17 3 4h-6zM30 37l3-4h-6zM20 27l4-3v6zM40 27l-4-3v6z"/><path fill="#bcd" d="M48 40v6h-6z"/></svg></button>
                        <button aria-label="游标" class="h-12 bg-[#282828] flex items-center justify-center"><svg class="size-11" viewBox="0 0 44 44"><circle cx="22" cy="22" r="16.500" fill="none" stroke="#b04455" stroke-width="2"/><circle cx="22" cy="22" r="16.500" fill="none" stroke="#eee" stroke-width="2" stroke-dasharray="7 6"/><path d="M22 10v8M22 26v8M10 22h8M26 22h8" stroke="#999" stroke-width="1.500"/></svg></button>
                    </div>
                    <div class="flex flex-col gap-px rounded overflow-hidden">
                        <button aria-label="移动" class="h-12 bg-[#282828] flex items-center justify-center"><svg class="size-10" viewBox="0 0 40 40"><path fill="#e6e6e6" d="m20 2 5 8H15zM20 38l5-8H15zM2 20l7-4.500v9zM38 20l-7-4.500v9z"/><path d="M20 11v4M20 25v4M11 20h4M25 20h4" stroke="#e6e6e6" stroke-width="2"/></svg></button>
                        <button aria-label="旋转" class="h-12 bg-[#282828] flex items-center justify-center"><svg class="size-10" viewBox="0 0 40 40"><path d="M6 18c2-14 19-17 25-7M34 23c-3 13-18 16-25 6" fill="none" stroke="#e6e6e6" stroke-width="2"/><path fill="#e6e6e6" d="M2 18h9l-4 8zM30 21h9l-4-8z"/><path fill="#999" d="m20 13 5.500 7-5.500 7-5.500-7z"/></svg></button>
                        <button aria-label="缩放" class="h-[50px] bg-[#282828] flex items-center justify-center"><svg class="size-[50px]" viewBox="0 0 50 50"><path d="M13 22V13h24v24h-9" fill="none" stroke="#999" stroke-width="1.500"/><path fill="#e6e6e6" d="M11 25h14v14H11zM35 15v8l-3-2-5 5-1-1 4-6-2-3z"/><path fill="#999" d="M50 40v7h-6z"/></svg></button>
                        <button aria-label="变换" class="h-12 bg-[#282828] flex items-center justify-center"><svg class="size-10" viewBox="0 0 40 40"><circle cx="20" cy="20" r="15" fill="none" stroke="#ccc" stroke-width="1.800"/><path fill="#e6e6e6" stroke="#282828" d="m20 3 5 8H15zM20 37l5-8H15zM2 20l7-5v10zM38 20l-7-5v10z"/><path fill="#e6e6e6" d="M14 14h12v12H14z"/></svg></button>
                    </div>
                    <button aria-label="标注" class="h-12 rounded bg-[#282828] flex items-start justify-center pt-2"><svg class="size-9" viewBox="0 0 36 36"><path fill="#e6e6e6" d="M26 0 12 10 6 24l8-4L27 6z"/></svg></button>
                </div>
                <div class="text-white text-shadow-md leading-[27px] -mt-0.5"><p>用户透视</p><p class="text-[16px] font-medium">(1) Collection | Cube</p></div>
            </div>

            <!-- Pressed mouse keys and pointer -->
            <svg class="absolute left-[219px] top-[248px] w-12 h-16" viewBox="0 0 48 64"><path d="M2 16C2 6 6 2 16 2h16c10 0 14 4 14 14v22c0 12-9 21-22 21S2 50 2 38zM2 31h44M17 2v29M31 2v29" fill="none" stroke="#fff" stroke-width="2"/></svg>
            <svg class="absolute left-[473px] top-[297px] w-4 h-7" viewBox="0 0 16 28"><path d="M1 1v22l5-5 4 9 3-1.500-4-8.500h6z" fill="#fff" stroke="#222"/></svg>

            <!-- Axis gizmo -->
            <svg class="absolute right-0 top-[86px] w-[150px] h-[130px] font-semibold" viewBox="0 0 150 130">
                <circle cx="75" cy="57" r="10" fill="#a3254b"/>
                <path d="M75 17v38" stroke="#5a86c8" stroke-width="2"/><path d="m71 53 4 6 4-6z" fill="#3a1522"/><path d="M27 64h37" stroke="#84a83a" stroke-width="3"/>
                <circle cx="75" cy="17" r="12" fill="#2f83e3"/><text x="75" y="23" text-anchor="middle" font-size="16" fill="#12233a">Z</text>
                <circle cx="27" cy="64" r="12" fill="#87d115"/><text x="27" y="70" text-anchor="middle" font-size="16" fill="#1d2c08">Y</text>
                <circle cx="75" cy="69" r="12.500" fill="#7d2946" stroke="#e02f62" stroke-width="1.500"/>
                <circle cx="123" cy="64" r="11.500" fill="#4f6b25" stroke="#84b038" stroke-width="1.500"/>
                <circle cx="75" cy="112" r="11.500" fill="#35577f" stroke="#3f78b8" stroke-width="1.500"/>
                <path d="m147 15-5 6 5 6" fill="none" stroke="#aaa" stroke-width="1.500"/>
            </svg>
            <div class="absolute right-3.5 top-[212px] flex flex-col gap-[5px]">
                <button aria-label="缩放视图" class="size-10 rounded-full bg-[#2c2c2c] flex items-center justify-center"><svg class="size-6" viewBox="0 0 24 24"><circle cx="14" cy="10" r="9.500" fill="#e6e6e6"/><path d="M8 16 2 23" stroke="#e6e6e6" stroke-width="3"/><path d="M14 5v10M9 10h10" stroke="#222" stroke-width="1.500"/></svg></button>
                <button aria-label="平移视图" class="size-10 rounded-full bg-[#2c2c2c] flex items-center justify-center"><svg class="size-6" viewBox="0 0 24 24"><path d="M7 12 5.500 4M10.500 11V2M14.500 11 15 2M18 12l2.500-7M7.500 17 1.500 12" stroke="#e6e6e6" stroke-width="2.600" stroke-linecap="round"/><path fill="#e6e6e6" d="M6 11h13.500l3-2-3 9c-1 4-3 5.500-6.500 5.500S7.500 22 6 19l-3-5z"/></svg></button>
                <button aria-label="相机视图" class="size-10 rounded-full bg-[#2c2c2c] flex items-center justify-center"><svg class="size-6" viewBox="0 0 24 24"><g fill="none" stroke="#e6e6e6" stroke-width="1.800"><path d="M5 12a4.500 4.500 0 1 1 4-7 5.500 5.500 0 1 1 7 7.500H5"/><circle cx="5.500" cy="8" r="1"/><circle cx="15.500" cy="7" r="1.500"/><path d="M7 15h9v8H7zM3 17v4l4-1"/></g><path fill="#e6e6e6" d="m18 19 5-3v6z"/></svg></button>
                <button aria-label="透视切换" class="size-10 rounded-full bg-[#2c2c2c] flex items-center justify-center"><svg class="size-6" viewBox="0 0 24 24"><path d="M5 2h14l4 20H1zM4 8h16M2.500 14.500h19M9.500 2 8 22M14.500 2 16 22" fill="none" stroke="#e6e6e6" stroke-width="1.800"/></svg></button>
            </div>
        </section>
    </div>

    <!-- Node editor -->
    <section class="flex-1 min-h-0 flex flex-col bg-[#1d1d1d] rounded-lg overflow-hidden">
        <div class="h-9 shrink-0 flex items-center pl-3 pr-[11px]">
            <button aria-label="编辑器类型" class="w-[45px] h-7 rounded border border-[#303030] flex items-center justify-center"><svg class="size-[22px]"><use href="#geo"/></svg><svg class="size-3"><use href="#down"/></svg></button>
            <label class="ml-[7px] w-[102px] h-7 rounded border border-[#303030] flex items-center pl-2.5 pr-0.5"><select aria-label="几何节点类型" class="appearance-none flex-1"><option>修改器</option></select><svg class="size-3"><use href="#down"/></svg></label>
            <div class="ml-[18px] flex gap-[22px]"><button>视图</button><button>选择</button><button>添加</button><button>节点</button></div>
            <div class="flex-1 max-w-[232px]"></div>
            <div class="h-7 flex rounded overflow-hidden border border-[#303030]">
                <button aria-label="浏览节点树" class="w-[45px] border-r border-[#303030] flex items-center justify-center"><svg class="size-[22px]"><use href="#tree"/></svg><svg class="size-3"><use href="#down"/></svg></button>
                <input aria-label="节点树名称" value="Geometry Nodes" class="w-[150px] pl-2.5 text-[16px]">
                <button aria-label="伪用户" class="w-[29px] bg-[#3c3c3c] text-[#888] flex items-center justify-center"><svg class="size-[22px]"><use href="#shield"/></svg></button>
                <button aria-label="复制节点树" class="w-[29px] bg-[#3c3c3c] border-x border-[#2a2a2a] flex items-center justify-center"><svg class="size-[22px]"><use href="#copy"/></svg></button>
                <button aria-label="断开节点树" class="w-[29px] bg-[#3c3c3c] flex items-center justify-center"><svg class="size-3.5"><use href="#close"/></svg></button>
            </div>
            <button aria-label="固定" class="ml-[11px] text-[#999]"><svg class="size-[22px]"><use href="#pin"/></svg></button>
            <div class="flex-1"></div>
            <button aria-label="父节点树" class="w-7 h-7 rounded bg-[#2c2c2c] text-[#666] flex items-center justify-center"><svg class="size-[22px]"><use href="#parent"/></svg></button>
            <div class="ml-1.5 h-7 flex rounded overflow-hidden border border-[#2c2c2c]"><button aria-label="吸附" class="w-7 bg-[#484848] text-[#999] flex items-center justify-center"><svg class="size-[22px]"><use href="#magnet"/></svg></button><button aria-label="吸附目标" class="w-[46px] flex items-center justify-center gap-1"><svg class="size-[22px]"><use href="#grid"/></svg><svg class="size-3"><use href="#down"/></svg></button></div>
            <div class="ml-1.5 h-7 flex rounded overflow-hidden border border-[#2c2c2c]"><button aria-label="叠加层" class="w-7 bg-[#4772b3] text-white flex items-center justify-center"><svg class="size-[22px]"><use href="#overlay"/></svg></button><button aria-label="叠加层选项" class="w-7 flex items-center justify-center"><svg class="size-3"><use href="#down"/></svg></button></div>
        </div>
        <div class="flex-1 relative overflow-hidden">
            <div class="absolute right-0 top-0 bottom-0 w-3.5 bg-[#303030] border-l-2 border-[#e6e6e6]"></div>
            <svg class="absolute inset-0 size-full"><path d="M369 0c38 50 80 86 160 86" fill="none" stroke="#111" stroke-width="6"/><path d="M369 0c38 50 80 86 160 86" fill="none" stroke="#26e2a0" stroke-width="4"/></svg>
            <div class="absolute left-[781px] right-3.5 top-0 h-[3px] bg-[#b9f0da]"></div>

            <!-- Trim curve node -->
            <div class="absolute left-[531px] -top-[15px] w-[250px] rounded bg-[#303030] shadow-[0_2px_8px_#000] px-[18px] pb-3 text-[19px]">
                <div class="h-9 flex items-center justify-end">曲线</div>
                <div class="mt-[11px] h-[33px] flex rounded overflow-hidden"><button class="flex-1 bg-[#4772b3]">系数</button><button class="flex-1 bg-[#545454]">长度</button></div>
                <div class="mt-1 h-9 flex items-center">曲线</div>
                <div class="h-[37px] flex items-center">选中项</div>
                <label class="mt-px h-[33px] rounded bg-[#545454] flex items-center pl-[27px] pr-6">起始<input value="0.000" class="flex-1 min-w-0 text-right"></label>
                <label class="mt-1 h-[33px] rounded bg-[#4772b3] flex items-center pl-[27px] pr-6">结束<input value="1.000" class="flex-1 min-w-0 text-right"></label>
            </div>
            <svg class="absolute left-[520px] top-0 w-[280px] h-[220px]" stroke="#141414" stroke-width="1.500"><circle cx="261" cy="3" r="8" fill="#1ee6a3"/><circle cx="11" cy="86" r="8" fill="#1ee6a3"/><g><path d="m11 113 9 9-9 9-9-9z" fill="#cca6d6"/><path d="m11 150 9 9-9 9-9-9zM11 188l9 9-9 9-9-9z" fill="#a1a1a1"/><g fill="#111" stroke="none"><circle cx="11" cy="122" r="2"/><circle cx="11" cy="159" r="2"/><circle cx="11" cy="197" r="2"/></g></g></svg>
            <svg class="absolute right-0 top-0 w-[90px] h-[340px]" stroke="#141414" stroke-width="1.500"><path d="M12 0c15 18 28 30 56 37" fill="none" stroke="#ddd" stroke-width="3"/><path d="M12 0c15 18 28 30 56 37" fill="none" stroke="#888" stroke-width="3" stroke-dasharray="4 22" stroke-dashoffset="6"/><circle cx="77" cy="2" r="8" fill="#1ee6a3"/><circle cx="77" cy="74" r="8" fill="#1ee6a3"/><path d="m77 28 9 9-9 9-9-9zM77 102l9 9-9 9-9-9z" fill="#cca6d6"/><path d="m77 139 9 9-9 9-9-9z" fill="#598c5c"/><path d="m77 176 9 9-9 9-9-9z" fill="#9e4fc4"/><path d="m77 316 9 9-9 9-9-9z" fill="#6a5cc0"/><path d="m80 36 7-7M82 35h5" stroke="#a58cae"/><g fill="#111" stroke="none"><circle cx="77" cy="111" r="2"/><circle cx="77" cy="185" r="2"/><circle cx="77" cy="325" r="2"/></g></svg>

            <div class="relative flex">
                <div class="absolute left-0 top-0 w-3.5 h-10 bg-[#2a2a2a] rounded-r flex items-end pb-1"><svg class="size-3"><use href="#right"/></svg></div>
                <nav class="flex items-center h-16 pl-7 text-[16px]"><svg class="size-[22px] mr-[13px]"><use href="#object"/></svg>Cube<svg class="size-3.5 ml-[22px] mr-3"><use href="#right"/></svg><svg class="size-[22px] mr-3"><use href="#geo"/></svg>GeometryNodes<svg class="size-3.5 ml-[22px] mr-3.5"><use href="#right"/></svg><svg class="size-[22px] mr-3"><use href="#tree"/></svg>Geometry Nodes</nav>
            </div>
            <div class="absolute left-[307px] bottom-0.5 w-[403px] h-1.5 rounded bg-[#3a3a3a]"></div>
            <div class="absolute right-0 bottom-7 w-1.5 h-16 rounded bg-[#444]"></div>
        </div>
    </section>

    <!-- Timeline -->
    <section class="shrink-0 bg-[#303030] rounded-t-lg overflow-hidden relative">
        <div class="h-[37px] flex items-center pl-4 pr-[11px]">
            <button aria-label="编辑器类型" class="w-10 h-7 rounded border border-[#3a3a3a] bg-[#282828] flex items-center justify-center"><svg class="size-[22px]"><use href="#clock"/></svg><svg class="size-3"><use href="#down"/></svg></button>
            <div class="ml-3 h-7 flex rounded border border-[#3a3a3a] bg-[#282828]"><button class="w-[65px] pl-[7px] pr-1 border-r border-[#3a3a3a] flex items-center justify-between">回放<svg class="size-3"><use href="#down"/></svg></button><button class="w-[71px] pl-3 pr-1 flex items-center justify-between">插帧<svg class="size-3"><use href="#down"/></svg></button></div>
            <div class="ml-3.5 flex gap-[22px]"><button>视图</button><button>标记</button></div>
            <div class="w-[348px]"></div>
            <div class="h-7 flex rounded overflow-hidden bg-[#2c2c2c]"><button aria-label="自动插帧" class="w-[29px] bg-[#484848] flex items-center justify-center"><svg class="size-4" viewBox="0 0 16 16"><circle cx="8" cy="8" r="7" fill="none" stroke="#999" stroke-width="1.500"/></svg></button><button aria-label="自动插帧选项" class="w-[27px] text-[#555] flex items-center justify-center"><svg class="size-2.5"><use href="#down"/></svg></button></div>
            <div class="ml-[9px] h-7 flex rounded overflow-hidden bg-[#484848] divide-x divide-[#333] fill-[#e6e6e6]">
                <button aria-label="跳到起始帧" class="w-[29px] flex items-center justify-center"><svg class="size-4" viewBox="0 0 16 16"><path d="M1 0h3v16H1zM15 2v12L5 8z"/></svg></button>
                <button aria-label="上一关键帧" class="w-[29px] flex items-center justify-center"><svg class="w-6 h-4" viewBox="0 0 24 16"><path d="m7 0 7 8-7 8-7-8zM23 2v12l-8-6z"/></svg></button>
                <button aria-label="反向播放" class="w-[29px] flex items-center justify-center"><svg class="w-4 h-[18px]" viewBox="0 0 16 18"><path d="M16 0v18L0 9z"/></svg></button>
                <button aria-label="播放" class="w-[29px] flex items-center justify-center"><svg class="w-4 h-[18px]" viewBox="0 0 16 18"><path d="M0 0v18l16-9z"/></svg></button>
                <button aria-label="下一关键帧" class="w-[29px] flex items-center justify-center"><svg class="w-6 h-4" viewBox="0 0 24 16"><path d="m17 0 7 8-7 8-7-8zM1 2v12l8-6z"/></svg></button>
                <button aria-label="跳到结束帧" class="w-[29px] flex items-center justify-center"><svg class="size-4" viewBox="0 0 16 16"><path d="M12 0h3v16h-3zM1 2v12l10-6z"/></svg></button>
            </div>
            <div class="flex-1"></div>
            <input aria-label="当前帧" value="1" class="w-[106px] h-7 rounded bg-[#545454] text-center">
            <div class="ml-[9px] h-7 flex rounded overflow-hidden bg-[#545454] divide-x divide-[#3a3a3a]">
                <button aria-label="使用预览范围" class="w-7 flex items-center justify-center"><svg class="size-[22px]"><use href="#stopwatch"/></svg></button>
                <label class="w-32 flex items-center pl-[23px] pr-5">起始<input value="1" class="flex-1 min-w-0 text-right"></label>
                <label class="w-32 flex items-center pl-[23px] pr-5">结束<input value="250" class="flex-1 min-w-0 text-right"></label>
            </div>
        </div>
        <div class="h-6 bg-[#1d1d1d] flex pl-28 pr-[60px] pt-1.5 text-[#a5a5a5] [&>span]:flex-1 [&>span]:text-center">
            <span>20</span><span>40</span><span>60</span><span>80</span><span>100</span><span>120</span><span>140</span><span>160</span><span>180</span><span>200</span><span>220</span><span>240</span>
        </div>
        <div class="relative h-3.5 bg-[#1d1d1d] px-3"><div class="h-[13px] rounded-full bg-[#545454] flex items-center justify-end pr-1"><span class="size-2 rounded-full bg-[#333]"></span></div></div>
        <div class="absolute left-10 top-[42px] w-9 h-5 rounded bg-[#4772b3] text-white text-center">1</div>
        <svg class="absolute left-0 bottom-0 size-3 text-[#999]"><use href="#right"/></svg>
        <svg class="absolute right-0 bottom-1 size-3 text-[#999]"><use href="#left"/></svg>
    </section>
</div>

<!-- Right side -->
<div class="w-[334px] shrink-0 flex flex-col gap-[3px]">
    <!-- Outliner -->
    <section class="h-[276px] shrink-0 mr-0.5 bg-[#282828] rounded-lg flex flex-col overflow-hidden">
        <div class="h-[38px] shrink-0 bg-[#2c2c2c] flex items-center pl-[11px]">
            <button aria-label="编辑器类型" class="w-11 h-7 rounded border border-[#383838] bg-[#282828] flex items-center justify-center"><svg class="size-[22px]"><use href="#outliner"/></svg><svg class="size-3"><use href="#down"/></svg></button>
            <button aria-label="显示模式" class="ml-2.5 w-[45px] h-7 rounded border border-[#383838] bg-[#282828] flex items-center justify-center"><svg class="size-[22px]"><use href="#layers"/></svg><svg class="size-3"><use href="#down"/></svg></button>
            <label class="ml-[21px] w-[173px] h-7 rounded border border-[#383838] bg-[#1d1d1d] flex items-center pl-1.5"><svg class="size-6"><use href="#search"/></svg><input aria-label="搜索大纲" placeholder="搜索" class="ml-2 flex-1 min-w-0 placeholder:text-[#6a6a6a]"></label>
        </div>
        <ul class="flex-1 pt-px text-[#c8c8c8] [&>li]:h-[29px] [&>li]:flex [&>li]:items-center [&>li]:pr-4">
            <li class="pl-[33px]"><svg class="size-[22px] mr-2 text-[#e6e6e6]"><use href="#coll"/></svg>场景集合</li>
            <li class="pl-9 bg-[#2b2b2b]"><svg class="size-3.5 mr-2"><use href="#down"/></svg><span class="size-7 mr-1.5 bg-[#555] rounded flex items-center justify-center text-[#e6e6e6]"><svg class="size-[22px]"><use href="#coll"/></svg></span><span class="flex-1">Collection</span>
                <span class="relative flex mr-2.5"><input type="checkbox" checked aria-label="启用 Collection" class="appearance-none size-4 bg-[#e6e6e6] rounded-[1px]"><svg class="absolute inset-0 size-4 pointer-events-none" viewBox="0 0 16 16"><path d="m3 8 4 4 6-8" fill="none" stroke="#222" stroke-width="2"/></svg></span>
                <svg class="size-5 mr-[9px] text-[#e6e6e6]"><use href="#eye"/></svg><svg class="size-[21px] text-[#e6e6e6]"><use href="#camera"/></svg></li>
            <li class="pl-[42px]"><span class="w-px h-4 mr-6 bg-[#555]"></span><svg class="size-3.5 mr-1.5"><use href="#right"/></svg><span class="size-7 mr-1.5 bg-[#505050] rounded flex items-center justify-center"><svg class="size-[22px]" viewBox="0 0 16 16"><path d="M2 2h12L8 14.500z" fill="none" stroke="#d9884f" stroke-width="2.400"/></svg></span>Cube
                <svg class="size-[22px] ml-8 mr-1.5 text-[#5b70b5]"><use href="#wrenchline"/></svg><svg class="w-2.5 h-4 mb-2" viewBox="0 0 10 16"><path d="M1 1h6v6H4zM6 7v7" fill="none" stroke="#12b883" stroke-width="1.800"/></svg><span class="flex-1"></span>
                <svg class="size-5 mr-[9px] text-[#e6e6e6]"><use href="#eye"/></svg><svg class="size-[21px] text-[#e6e6e6]"><use href="#camera"/></svg></li>
            <li class="pl-[61px] bg-[#2b2b2b] text-[#777]"><svg class="size-[22px] mr-2"><use href="#coll"/></svg><span class="flex-1">xiangji</span>
                <input type="checkbox" aria-label="启用 xiangji" class="appearance-none size-4 border border-[#999] mr-2.5"><svg class="size-5 mr-[9px]"><use href="#eye"/></svg><svg class="size-[21px]"><use href="#camera"/></svg></li>
            <li></li>
            <li class="bg-[#2b2b2b]"></li>
            <li></li>
        </ul>
        <div class="ml-2.5 mb-px w-[293px] h-1.5 rounded bg-[#3c3c3c]"></div>
    </section>

    <!-- Properties -->
    <section class="flex-1 min-h-0 mr-0.5 bg-[#303030] rounded-lg flex flex-col overflow-hidden">
        <div class="h-9 shrink-0 flex items-center pl-3.5 pr-3">
            <button aria-label="编辑器类型" class="w-[42px] h-7 rounded border border-[#3a3a3a] bg-[#282828] flex items-center justify-center"><svg class="size-[22px]"><use href="#props"/></svg><svg class="size-3"><use href="#down"/></svg></button>
            <label class="ml-[35px] w-[171px] h-7 rounded bg-[#1d1d1d] flex items-center pl-1.5"><svg class="size-6"><use href="#search"/></svg><input aria-label="搜索属性" placeholder="搜索" class="ml-2 flex-1 min-w-0 placeholder:text-[#6a6a6a]"></label>
            <button aria-label="选项" class="ml-auto size-[26px] rounded bg-[#282828] flex items-center justify-center"><svg class="size-3"><use href="#down"/></svg></button>
        </div>
        <div class="flex-1 min-h-0 flex">
            <div class="w-[43px] shrink-0 bg-[#1d1d1d] rounded-tr pt-[9px] pl-1 text-[#b0b0b0] flex flex-col [&>button]:h-10 [&>button]:shrink-0 [&>button]:flex [&>button]:items-center [&>button]:justify-center">
                <button aria-label="工具"><svg class="size-[22px]"><use href="#tools"/></svg></button>
                <button aria-label="渲染" class="mt-[11px]"><svg class="size-[22px]"><use href="#rendertab"/></svg></button>
                <button aria-label="输出"><svg class="size-[22px]"><use href="#printer"/></svg></button>
                <button aria-label="视图层"><svg class="size-[22px]"><use href="#layers"/></svg></button>
                <button aria-label="场景"><svg class="size-[22px]"><use href="#scene"/></svg></button>
                <button aria-label="世界环境" class="text-[#b04a5c]"><svg class="size-[22px]"><use href="#world"/></svg></button>
                <button aria-label="集合" class="mt-3 text-[#d0d0d0]"><svg class="size-[22px]"><use href="#colltab"/></svg></button>
                <button aria-label="物体" class="mt-[11px] text-[#c78a45]"><svg class="size-[22px]"><use href="#object"/></svg></button>
                <button aria-label="修改器" class="bg-[#303030] rounded-l text-[#7597ec]"><svg class="size-[22px]"><use href="#wrench"/></svg></button>
                <button aria-label="粒子" class="text-[#7a9be0]"><svg class="size-[22px]"><use href="#particles"/></svg></button>
                <button aria-label="物理" class="text-[#7a9be0]"><svg class="size-[22px]"><use href="#physics"/></svg></button>
                <button aria-label="约束" class="text-[#7a9be0]"><svg class="size-[22px]"><use href="#constraint"/></svg></button>
                <button aria-label="数据" class="text-[#25b585]"><svg class="size-[22px]"><use href="#mesh"/></svg></button>
                <button aria-label="材质" class="text-[#c25266]"><svg class="size-[22px]"><use href="#matball"/></svg></button>
                <button aria-label="纹理" class="mt-[11px] text-[#b85a6a]"><svg class="size-[22px]"><use href="#texture"/></svg></button>
            </div>
            <div class="flex-1 min-w-0 pl-3 pr-3">
                <div class="h-[53px] pl-1 flex items-center"><svg class="size-[22px] mr-3"><use href="#object"/></svg>Cu<svg class="size-3.5 ml-3 mr-3"><use href="#right"/></svg><svg class="size-[22px] mr-3"><use href="#geo"/></svg>Geometr...<button aria-label="固定" class="ml-auto text-[#999]"><svg class="size-[22px]"><use href="#pin"/></svg></button></div>
                <button class="mt-[13px] w-full h-7 rounded bg-[#545454] flex items-center pl-3"><svg class="size-3.5" viewBox="0 0 14 14"><path d="M7 0v14M0 7h14" stroke="#e6e6e6" stroke-width="1.500"/></svg><span class="flex-1 text-center">添加修改器</span></button>
                <div class="mt-[15px] -ml-0.5 h-[154px] rounded border border-[#4a6290] bg-[#3d3d3d] pt-[5px]">
                    <div class="h-7 flex items-center pl-[11px]"><svg class="size-3.5 text-[#aaa]"><use href="#down"/></svg><svg class="size-[22px] ml-2"><use href="#geo"/></svg>
                        <div class="ml-3.5 h-7 flex rounded overflow-hidden text-white"><button aria-label="编辑笼" class="w-[25px] bg-[#484848] flex items-center justify-center"><svg class="size-[22px]"><use href="#mesh"/></svg></button><button aria-label="编辑模式" class="w-[25px] bg-[#4772b3] border-r border-[#38598c] flex items-center justify-center"><svg class="size-[22px]"><use href="#editmode"/></svg></button><button aria-label="视图显示" class="w-[25px] bg-[#4772b3] border-r border-[#38598c] flex items-center justify-center"><svg class="size-[22px]"><use href="#monitor"/></svg></button><button aria-label="渲染显示" class="w-[25px] bg-[#4772b3] flex items-center justify-center"><svg class="size-[22px]"><use href="#camera"/></svg></button><button aria-label="更多" class="w-6 bg-[#333] flex items-center justify-center"><svg class="size-3.5"><use href="#down"/></svg></button></div>
                        <button aria-label="移除" class="ml-2"><svg class="size-4"><use href="#close"/></svg></button>
                        <svg class="w-4 h-2 ml-auto mr-2.5" viewBox="0 0 16 8"><path d="M0 1h16M0 4h16M0 7h16" stroke="#aaa" stroke-width="1.500" stroke-dasharray="2 2"/></svg>
                    </div>
                    <div class="mt-3.5 ml-3 mr-3 h-7 flex rounded overflow-hidden bg-[#1d1d1d]">
                        <button aria-label="浏览节点树" class="w-[45px] bg-[#282828] flex items-center justify-center"><svg class="size-[22px]"><use href="#tree"/></svg><svg class="size-3"><use href="#down"/></svg></button>
                        <input aria-label="节点组" value="Geometry..." class="flex-1 min-w-0 pl-3">
                        <button aria-label="伪用户" class="w-[29px] bg-[#484848] text-[#888] flex items-center justify-center"><svg class="size-[22px]"><use href="#shield"/></svg></button>
                        <button aria-label="复制" class="w-[29px] bg-[#484848] border-x border-[#3a3a3a] flex items-center justify-center"><svg class="size-[22px]"><use href="#copy"/></svg></button>
                        <button aria-label="断开" class="w-[29px] bg-[#484848] flex items-center justify-center"><svg class="size-3.5"><use href="#close"/></svg></button>
                    </div>
                    <div class="mt-2 h-7 flex items-center pl-14"><label for="verts">顶点</label><input id="verts" value="16" class="ml-3.5 w-[90px] h-7 rounded bg-[#545454] text-center"><span class="ml-auto mr-[23px] size-1.5 rounded-full bg-[#e6e6e6]"></span></div>
                    <div class="mt-2 h-7 flex items-center pl-5"><svg class="size-3.5 mr-2"><use href="#right"/></svg>管理</div>
                </div>
            </div>
        </div>
    </section>
</div>
</div>

<!-- Status bar -->
<footer class="h-8 shrink-0 bg-[#181818] flex items-center pl-[17px] text-[#989898]">
    <span class="w-[283px] flex items-center gap-1.5"><svg class="w-[18px] h-6"><use href="#mouseL"/></svg>选择</span>
    <span class="w-[283px] flex items-center gap-1.5"><svg class="w-[18px] h-6"><use href="#mouseM"/></svg>旋转视图</span>
    <span class="flex items-center gap-1.5"><svg class="w-[18px] h-6"><use href="#mouseR"/></svg>物体</span>
    <span class="ml-auto flex items-center gap-[5px] [&>i]:w-px [&>i]:h-5 [&>i]:bg-[#989898]"><span>Collection</span><i></i><span>Cube</span><i></i><span>顶点:51</span><i></i><span>面:32</span><i></i><span>三角面:64</span><i></i><span>物体:0/2</span><i></i><span>时长: 00:10+10 (帧 1/250)</span><i></i><span>内存: 39.6 MiB</span><i></i><span>显存: 0.5/2.0 GiB</span><i></i><svg class="size-[22px] mx-1.5"><use href="#noworld"/></svg><i></i><span>4.2.3</span></span>
</footer>

<!-- Watermark -->
<div class="fixed left-[11px] bottom-2.5 flex items-center gap-2 text-white/35 pointer-events-none">
    <svg class="w-10 h-10" viewBox="0 0 40 40"><path fill="currentColor" fill-rule="evenodd" d="M5 0h30a5 5 0 0 1 5 5v30a5 5 0 0 1-5 5H5a5 5 0 0 1-5-5V5a5 5 0 0 1 5-5zm10 7C10 7 6 11 9 15l9 3v12l6-1V18l9-4C31 9 21 6 15 7zM6 19a3 3 0 1 0 .01 0zm27 1v12l3-2V18z"/></svg>
    <span class="text-[36px] leading-8 font-bold">tafe.cc</span>
</div>
</body>
</html>
